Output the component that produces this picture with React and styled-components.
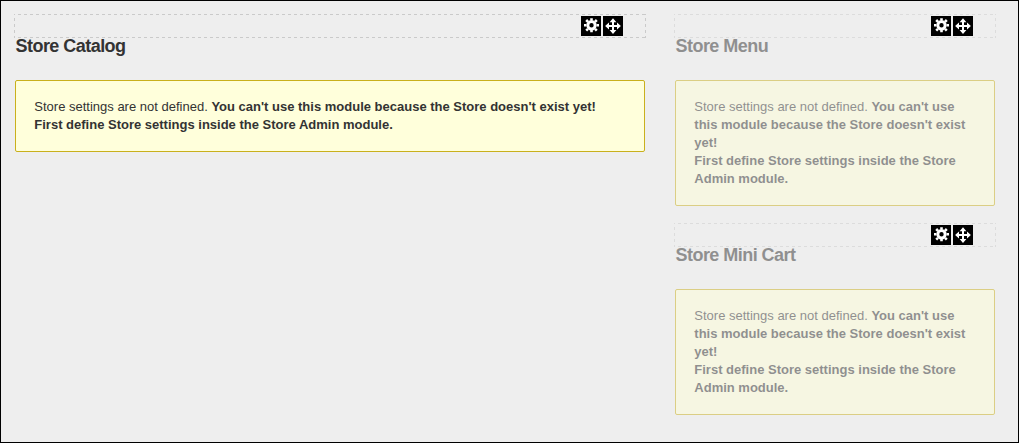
import React from "react";
import styled, { createGlobalStyle } from "styled-components";

const GlobalStyle = createGlobalStyle`
  * { box-sizing: border-box; }
  body {
    margin: 0;
    background: #eee;
    font-family: "Liberation Sans", Arial, sans-serif;
  }
`;

const Page = styled.main`
  display: flex;
  align-items: flex-start;
  gap: 28px;
  height: 443px;
  padding: 13px;
  border: 1px solid #000;
  background: #eee;
`;

const Column = styled.div`
  display: flex;
  flex-direction: column;
  gap: 17px;
  flex: none;
  width: ${(p) => p.$width}px;
`;

const Module = styled.section`
  display: flex;
  flex-direction: column;
`;

const Handle = styled.div`
  --dash: ${(p) => (p.$faded ? "#dcdcdc" : "#cacaca")};
  --pattern: var(--dash) 0 1px, transparent 1px 4px, var(--dash) 4px 6px;
  display: flex;
  justify-content: flex-end;
  gap: 2px;
  height: 24px;
  padding: 2px 23px 0 0;
  background:
    repeating-linear-gradient(90deg, var(--pattern)) 0 0 / 100% 1px no-repeat,
    repeating-linear-gradient(90deg, var(--pattern)) 0 100% / 100% 1px no-repeat,
    repeating-linear-gradient(180deg, var(--pattern)) 0 0 / 1px 100% no-repeat,
    repeating-linear-gradient(180deg, var(--pattern)) 100% 0 / 1px 100% no-repeat;
`;

const IconButton = styled.button`
  display: block;
  width: 20px;
  height: 20px;
  padding: 0;
  border: 0;
  background: #000;
  color: #fff;

  svg { display: block; }
`;

const Body = styled.div`
  padding: 0 1px;
  opacity: ${(p) => (p.$faded ? 0.5 : 1)};
`;

const Title = styled.h2`
  margin: 0 0 24px;
  padding-left: 0.5px;
  height: 18px;
  color: #333;
  font-size: 18px;
  font-weight: bold;
  line-height: 16px;
  letter-spacing: -0.54px;
`;

const Notice = styled.div`
  padding: 17px 17px 17px 18.3px;
  border: 1px solid #c9b01c;
  border-radius: 2px;
  background: ${(p) => (p.$faded ? "#ffffd7" : "#ffffdb")};
  color: #333;
  font-size: 13px;
  line-height: 18px;
`;

const Gear = () => (
  <svg width="20" height="20" viewBox="0 0 20 20" fill="none" stroke="currentColor">
    <circle cx="10.5" cy="9.3" r="3.7" strokeWidth="3" />
    <path
      strokeWidth="2.6"
      d="M10.5 2.3v2.2M10.5 14.1v2.2M3 9.3h2.4M15.6 9.3h2.4M5.2 4l1.8 1.8M14 12.8l1.8 1.8M5.2 14.6l1.8-1.8M14 5.8l1.8-1.8"
    />
  </svg>
);

const Move = () => (
  <svg width="20" height="20" viewBox="0 0 20 20" fill="currentColor">
    <path d="M10 2.3l3.4 3.9H11v2.9h3V6.6l3.9 3.4-3.9 3.5V11h-3v3h2.4L10 17.9 6.6 14H9v-3H6v2.5L2.1 10 6 6.6v2.5h3V6.2H6.6z" />
  </svg>
);

function StoreModule({ title, faded }) {
  return (
    <Module>
      <Handle $faded={faded}>
        <IconButton aria-label="Settings"><Gear /></IconButton>
        <IconButton aria-label="Move"><Move /></IconButton>
      </Handle>
      <Body $faded={faded}>
        <Title>{title}</Title>
        <Notice $faded={faded}>
          Store settings are not defined.{" "}
          <b>
            You can't use this module because the Store doesn't exist yet!
            <br />
            First define Store settings inside the Store Admin module.
          </b>
        </Notice>
      </Body>
    </Module>
  );
}

export default function App() {
  return (
    <>
      <GlobalStyle />
      <Page>
        <Column $width={632}>
          <StoreModule title="Store Catalog" />
        </Column>
        <Column $width={322}>
          <StoreModule title="Store Menu" faded />
          <StoreModule title="Store Mini Cart" faded />
        </Column>
      </Page>
    </>
  );
}
